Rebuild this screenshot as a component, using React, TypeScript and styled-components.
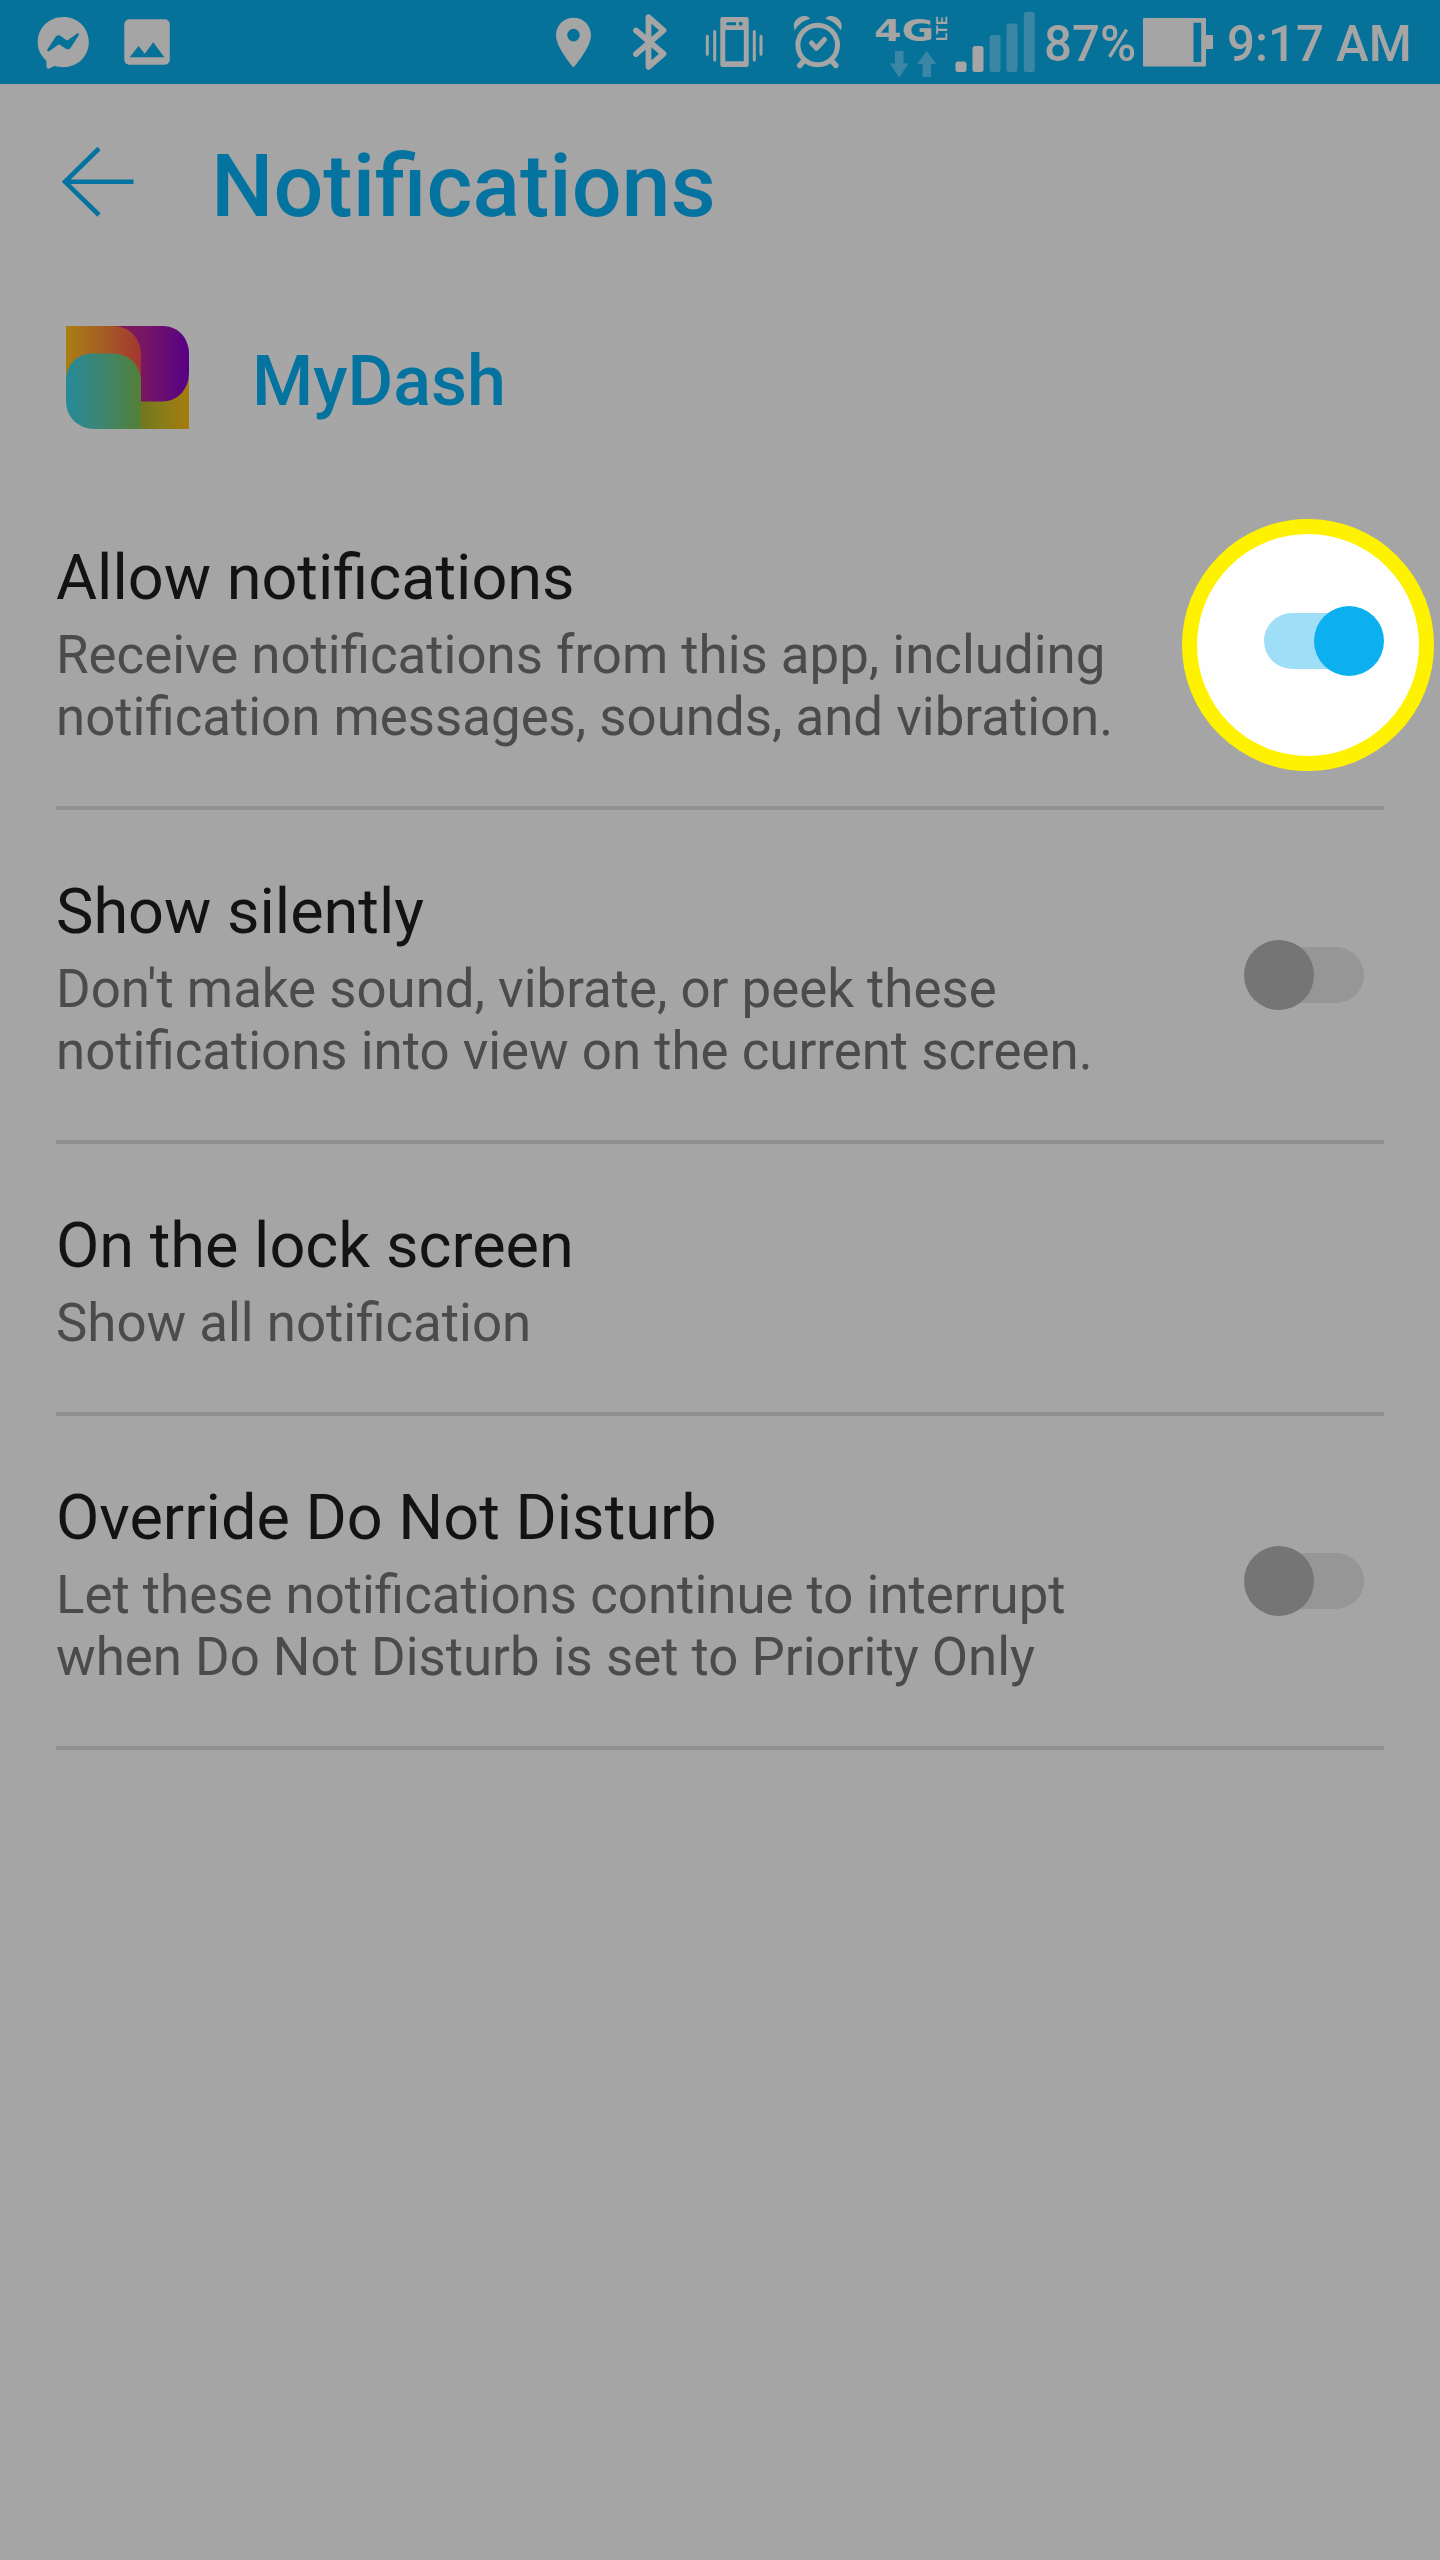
import React from "react";
import styled, { createGlobalStyle } from "styled-components";

const GlobalStyle = createGlobalStyle`
  body { margin: 0; background: #a5a5a5; }
  * { box-sizing: border-box; }
`;

const Screen = styled.div`
  width: 1440px;
  min-height: 2560px;
  background: #a5a5a5;
  font-family: Roboto, "Noto Sans", sans-serif;
  overflow: hidden;
`;

const StatusBar = styled.div`
  height: 84px;
  display: flex;
  align-items: center;
  justify-content: space-between;
  padding: 0 31px 0 36px;
  background: #06729a;
  color: #a5a5a5;
`;

const StatusGroup = styled.div`
  display: flex;
  align-items: center;
`;

const Glyph = styled.svg<{ $gap?: number }>`
  display: block;
  flex: none;
  height: 84px;
  margin-left: ${(p) => p.$gap ?? 0}px;
`;

const StatusText = styled.span<{ $width: number; $gap: number }>`
  width: ${(p) => p.$width}px;
  margin-left: ${(p) => p.$gap}px;
  padding-top: 4px;
  font-size: 49.2px;
  font-weight: 500;
  line-height: 80px;
  white-space: nowrap;
`;

const TitleBar = styled.header`
  height: 195px;
  display: flex;
  align-items: center;
  padding-left: 60px;
  color: #0473a0;
`;

const Title = styled.h1`
  margin: 0 0 0 76px;
  padding-top: 9px;
  font-size: 88px;
  font-weight: 500;
  line-height: 104px;
`;

const AppHeader = styled.section`
  height: 197px;
  display: flex;
  align-items: center;
  padding-left: 64px;
  background: #a6a6a6;
  color: #0473a0;
`;

const AppName = styled.h2`
  margin: 0 0 0 60px;
  padding-top: 6px;
  font-size: 70px;
  font-weight: 500;
  line-height: 80px;
`;

const List = styled.ul`
  list-style: none;
  margin: 0;
  padding: 0 56px;
`;

const Row = styled.li<{ $height: number }>`
  height: ${(p) => p.$height}px;
  display: flex;
  justify-content: space-between;
  border-bottom: 4px solid #909090;
`;

const RowText = styled.div`
  padding-top: 65px;
  white-space: pre-line;
`;

const RowTitle = styled.div`
  font-size: 63px;
  line-height: 74px;
  color: #131313;
`;

const RowDetail = styled.div`
  padding-top: 9px;
  font-size: 52.8px;
  line-height: 62px;
  color: #4b4b4b;
`;

const Toggle = styled.div<{ $on: boolean }>`
  position: relative;
  flex: none;
  width: 120px;
  height: 70px;
  margin: 130px ${(p) => (p.$on ? 0 : 20)}px 0 0;
  display: flex;
  align-items: center;
  justify-content: ${(p) => (p.$on ? "flex-end" : "flex-start")};
`;

const Track = styled.div<{ $on: boolean }>`
  position: absolute;
  top: 7px;
  left: ${(p) => (p.$on ? 0 : 20)}px;
  right: ${(p) => (p.$on ? 20 : 0)}px;
  height: 56px;
  border-radius: 28px;
  background: ${(p) => (p.$on ? "#9edff7" : "#969696")};
`;

const Knob = styled.div<{ $on: boolean }>`
  position: relative;
  width: 70px;
  height: 70px;
  border-radius: 50%;
  background: ${(p) => (p.$on ? "#0db0ef" : "#757575")};
`;

const Spotlight = styled.div`
  position: absolute;
  left: -82px;
  top: -87px;
  width: 252px;
  height: 252px;
  border: 15px solid #fff200;
  border-radius: 50%;
  background: #fefefe;
`;

type Setting = { title: string; detail: string; height: number; on?: boolean; spotlight?: boolean };

const settings: Setting[] = [
  {
    title: "Allow notifications",
    detail: "Receive notifications from this app, including\nnotification messages, sounds, and vibration.",
    height: 334,
    on: true,
    spotlight: true,
  },
  {
    title: "Show silently",
    detail: "Don't make sound, vibrate, or peek these\nnotifications into view on the current screen.",
    height: 334,
    on: false,
  },
  { title: "On the lock screen", detail: "Show all notification", height: 272 },
  {
    title: "Override Do Not Disturb",
    detail: "Let these notifications continue to interrupt\nwhen Do Not Disturb is set to Priority Only",
    height: 334,
    on: false,
  },
];

const Messenger = () => (
  <Glyph viewBox="36 0 54 84" width="54" fill="#a5a5a5">
    <path d="M63.3 17C49 17 37.700 28 37.700 42c0 8 3.500 14 8.500 18.500l.5 6.500c.1 1.500 1.300 2 2.500 1.400l5-2.300c3 .8 6 1.100 9.100 1.100C77.500 67.200 88.800 56.500 88.800 42S77.500 17 63.300 17z" />
    <path fill="#06729a" d="M47.500 49.200l8-12.200c1.400-2.100 3.500-2.300 5.300-1l5 3.800c.8.600 1.400.6 2.200.1l8.800-6.200c1.500-1 2.700.2 1.800 1.700l-7.700 12c-1.500 2.200-3.700 2.500-5.500 1.200l-5.200-3.700c-.8-.6-1.500-.5-2.300.1l-8.400 6c-1.500 1-3-.2-2-1.800z" />
  </Glyph>
);

const Picture = () => (
  <Glyph viewBox="124 0 46 84" width="46" $gap={34} fill="#a5a5a5">
    <rect x="124.300" y="19.200" width="45.500" height="45.500" rx="5" />
    <path fill="#06729a" d="M129.700 57.200l8.800-11.200 6.300 7.800 8.400-11.600 11.200 15z" />
  </Glyph>
);

const Pin = () => (
  <Glyph viewBox="555 0 37 84" width="37" fill="#a5a5a5">
    <path
      fillRule="evenodd"
      d="M573.500 17.800c-9.900 0-17.500 7.700-17.500 17.500C556 48 573.500 67.500 573.500 67.500S591 48 591 35.300c0-9.800-7.600-17.500-17.500-17.500zm0 11a6.300 6.300 0 1 1 0 12.600 6.300 6.300 0 0 1 0-12.600z"
    />
  </Glyph>
);

const Bluetooth = () => (
  <Glyph viewBox="632 0 36 84" width="36" $gap={40} fill="none" stroke="#a5a5a5" strokeWidth="5.800" strokeLinecap="round">
    <path d="M636 30.500l27.500 23.300-15 13V17.200l15 13.200L636 54" strokeLinejoin="round" />
  </Glyph>
);

const Vibrate = () => (
  <Glyph viewBox="705 0 59 84" width="59" $gap={37} fill="none" stroke="#a5a5a5">
    <path d="M707.300 36.300v18M714.700 31.500v28.500M754.300 31.500v28.500M761 36.300v18" strokeWidth="3" strokeLinecap="round" />
    <path
      fill="#a5a5a5"
      stroke="none"
      fillRule="evenodd"
      d="M722.500 17h24q2.200 0 2.200 2.200v45.600q0 2.200-2.200 2.200h-24q-2.200 0-2.200-2.200V19.200q0-2.200 2.200-2.200zM725.300 30v31.200h18.500V30zM727.500 22.200q-1.300 0-1.300 1.500t1.300 1.500h7.500q1.300 0 1.300-1.500t-1.300-1.500zM740.700 21.700a2 2 0 1 0 0 4 2 2 0 0 0 0-4z"
    />
  </Glyph>
);

const Alarm = () => (
  <Glyph viewBox="793 0 51 84" width="51" $gap={29} fill="none" stroke="#a5a5a5" strokeLinecap="round">
    <circle cx="817.700" cy="45" r="19.800" strokeWidth="5" />
    <path d="M804 60.500l-4.300 5M831.500 60.500l4.300 5" strokeWidth="5.500" />
    <path d="M811.500 43l5 5.200 8-8.700" strokeWidth="5" strokeLinejoin="round" />
    <path fill="#a5a5a5" stroke="none" d="M794.800 30.500c-3.500-8 3-15 10.500-14.500 2.200.2 4.200 1.400 4.700 2.800C802.500 21 797.500 25.500 794.800 30.500zM840.700 30.500c3.500-8-3-15-10.500-14.500-2.200.2-4.200 1.400-4.700 2.800C833 21 838 25.500 840.700 30.500z" />
  </Glyph>
);

const Network = () => (
  <Glyph viewBox="874 0 78 84" width="78" $gap={30} fill="#a5a5a5">
    <text x="874" y="40.500" fontFamily="DejaVu Sans" fontWeight="700" fontSize="31" textLength="60" lengthAdjust="spacingAndGlyphs">4G</text>
    <text transform="translate(946.500 41) rotate(-90)" fontFamily="Roboto" fontWeight="700" fontSize="15" textLength="24.500" lengthAdjust="spacingAndGlyphs">LTE</text>
    <path fill="#3a86a4" d="M895 51h8.500v12.500h5L899.200 77.500 889.800 63.500h5.200zM922.500 77h8.500V64h5L926.800 51 917 64h5.500z" />
  </Glyph>
);

const Signal = () => (
  <Glyph viewBox="955 0 80 84" width="80" $gap={3} fill="#3a86a4">
    <rect x="955.500" y="61.500" width="11" height="10.500" rx="2.500" fill="#a5a5a5" />
    <rect x="972.500" y="46" width="11" height="26" rx="2.500" fill="#a5a5a5" />
    <rect x="989.500" y="35" width="11" height="37" rx="2.500" />
    <rect x="1006.500" y="23.500" width="11" height="48.500" rx="2.500" />
    <rect x="1023.800" y="12" width="11" height="60" rx="2.500" />
  </Glyph>
);

const Battery = () => (
  <Glyph viewBox="1142 0 72 84" width="72" fill="#a5a5a5">
    <path
      fillRule="evenodd"
      d="M1144 18h61q1 0 1 1v16h7v14h-7v16.500q0 1-1 1h-61q-1 0-1-1V19q0-1 1-1zM1193.500 22.700V62h7.700V22.700z"
    />
  </Glyph>
);

const BackArrow = () => (
  <svg width="75" height="76" viewBox="60 143.500 75 76" fill="none" stroke="#0473a0" strokeWidth="4.600">
    <path d="M133.500 181.300H65M99 148L65 181.300 99 214.500" />
  </svg>
);

const DashLogo = () => (
  <svg width="128" height="107" viewBox="64 324 128 107">
    <defs>
      <linearGradient id="orange"><stop stopColor="#aa7e12" /><stop offset=".5" stopColor="#a55d25" /><stop offset="1" stopColor="#a33631" /></linearGradient>
      <linearGradient id="purple"><stop stopColor="#851c50" /><stop offset=".45" stopColor="#751666" /><stop offset="1" stopColor="#560086" /></linearGradient>
      <linearGradient id="teal"><stop stopColor="#268a9a" /><stop offset=".5" stopColor="#3e856d" /><stop offset="1" stopColor="#547f36" /></linearGradient>
      <linearGradient id="gold"><stop stopColor="#6e771e" /><stop offset=".45" stopColor="#877c1a" /><stop offset="1" stopColor="#a67c0b" /></linearGradient>
    </defs>
    <path fill="url(#gold)" d="M138 378h51v51h-51z" />
    <path fill="url(#purple)" d="M112 326h51c15 0 26 12 26 28v18c0 17-11 29.500-27 29.500h-50z" />
    <path fill="url(#orange)" d="M66 326h47c16 0 28 12 28 29v35H66z" />
    <path fill="url(#teal)" d="M66 381c0-16 11-27.500 26-27.500h21c16 0 28 12 28 28.500v47H95c-17 0-29-12-29-28z" />
  </svg>
);

export default function App() {
  return (
    <Screen>
      <GlobalStyle />
      <StatusBar>
        <StatusGroup>
          <Messenger />
          <Picture />
        </StatusGroup>
        <StatusGroup>
          <Pin />
          <Bluetooth />
          <Vibrate />
          <Alarm />
          <Network />
          <Signal />
          <StatusText $gap={9} $width={98}>87%</StatusText>
          <Battery />
          <StatusText $gap={13} $width={182}>9:17 AM</StatusText>
        </StatusGroup>
      </StatusBar>
      <TitleBar>
        <BackArrow />
        <Title>Notifications</Title>
      </TitleBar>
      <AppHeader>
        <DashLogo />
        <AppName>MyDash</AppName>
      </AppHeader>
      <List>
        {settings.map((s) => (
          <Row key={s.title} $height={s.height}>
            <RowText>
              <RowTitle>{s.title}</RowTitle>
              <RowDetail>{s.detail}</RowDetail>
            </RowText>
            {s.on !== undefined && (
              <Toggle $on={s.on} role="switch" aria-checked={s.on}>
                {s.spotlight && <Spotlight />}
                <Track $on={s.on} />
                <Knob $on={s.on} />
              </Toggle>
            )}
          </Row>
        ))}
      </List>
    </Screen>
  );
}
